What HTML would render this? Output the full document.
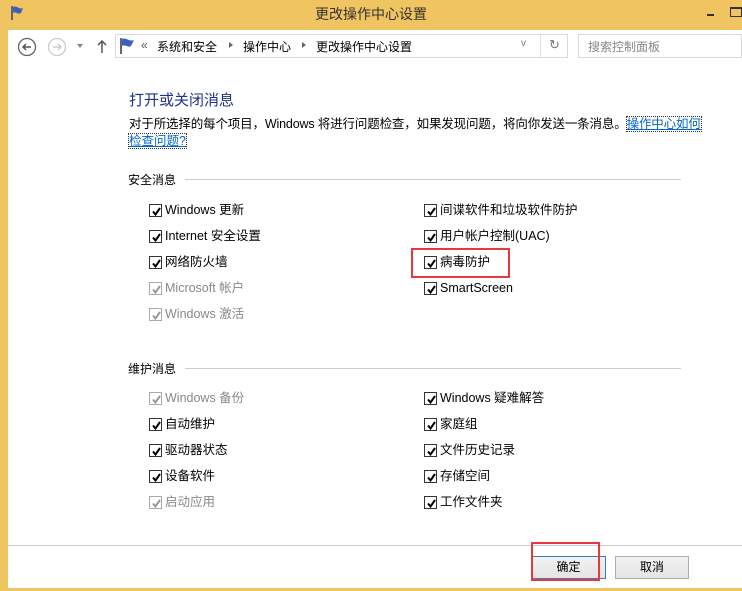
<!DOCTYPE html>
<html><head><meta charset="utf-8"><style>
*{margin:0;padding:0;box-sizing:border-box}
body{width:742px;height:591px;overflow:hidden;background:#f0c460;font-family:"Liberation Sans","Noto Sans CJK SC",sans-serif;font-size:12px;color:#000;position:relative}
.t{position:absolute;left:0;top:0;width:742px;height:30px;text-align:center;line-height:28px;font-size:14px;color:#333}
.c{position:absolute;left:8px;top:30px;width:734px;height:558px;background:#fff}
.a{position:absolute}
.cb{position:absolute;width:13px;height:13px;border:1px solid #333;background:#fff}
.cb svg{position:absolute;left:1px;top:1px}
.cb.g{border-color:#aaa}
.l{position:absolute;font-size:12.5px;line-height:16px}
.gr{color:#888}
.sec{position:absolute;left:128px;font-size:12px}
.line{position:absolute;height:1px;background:#ccc}
.btn{position:absolute;top:556px;height:23px;border:1px solid #adadad;background:linear-gradient(#f2f2f2,#e4e4e4);text-align:center;line-height:21px;font-size:12px}
.lk{color:#0066cc;text-decoration:underline;outline:1px dotted #333}
</style></head><body>
<div class="t">更改操作中心设置</div>
<svg class="a" style="left:9px;top:5px" width="16" height="16"><path d="M3 1v14" stroke="#446" stroke-width="1.5"/><path d="M4 2c4-2 6 3 10 1l-2 5c-3 2-6-2-8 0z" fill="#3a5fbf"/></svg>
<div class="a" style="left:707px;top:14px;width:7px;height:2px;background:#333"></div>
<div class="a" style="left:730px;top:7px;width:12px;height:10px;border:1px solid #333;border-top-width:2px"></div>
<div class="c"></div>
<svg class="a" style="left:17px;top:37px" width="20" height="20"><circle cx="10" cy="10" r="8.5" fill="none" stroke="#666" stroke-width="1.3"/><path d="M14 10H6M9 7l-3 3 3 3" fill="none" stroke="#555" stroke-width="1.5"/></svg>
<svg class="a" style="left:47px;top:37px" width="20" height="20"><circle cx="10" cy="10" r="8.5" fill="none" stroke="#ccc" stroke-width="1.3"/><path d="M6 10h8M11 7l3 3-3 3" fill="none" stroke="#ccc" stroke-width="1.5"/></svg>
<div class="a" style="left:77px;top:44px;border:3px solid transparent;border-top:4px solid #888"></div>
<svg class="a" style="left:96px;top:38px" width="12" height="16"><path d="M6 15V3M2 7l4-4 4 4" fill="none" stroke="#555" stroke-width="1.5"/></svg>
<div class="a" style="left:115px;top:34px;width:453px;height:24px;border:1px solid #d9d9d9"></div>
<svg class="a" style="left:118px;top:37px" width="18" height="18"><path d="M3 1v16" stroke="#334" stroke-width="1.5"/><path d="M4 2c4-2 7 3 12 1l-3 6c-3 2-6-2-9 0z" fill="#3a5fbf"/></svg>
<div class="a" style="left:141px;top:38px;font-size:12px;color:#555">«</div>
<div class="a" style="left:157px;top:38px;font-size:12px">系统和安全</div>
<div class="a" style="left:229px;top:42px;border:3px solid transparent;border-left:4px solid #666"></div>
<div class="a" style="left:243px;top:38px;font-size:12px">操作中心</div>
<div class="a" style="left:302px;top:42px;border:3px solid transparent;border-left:4px solid #666"></div>
<div class="a" style="left:316px;top:38px;font-size:12px">更改操作中心设置</div>
<div class="a" style="left:521px;top:38px;font-size:10px;color:#777">v</div>
<div class="a" style="left:540px;top:34px;width:1px;height:24px;background:#e0e0e0"></div>
<div class="a" style="left:549px;top:37px;font-size:13px;color:#777">↻</div>
<div class="a" style="left:578px;top:34px;width:164px;height:24px;border:1px solid #d9d9d9;font-size:12px;color:#888;padding:3px 0 0 9px">搜索控制面板</div>
<div class="a" style="left:129px;top:89px;font-size:15px;color:#1e3287">打开或关闭消息</div>
<div class="a" style="left:129px;top:116px;font-size:12.5px;line-height:17px;white-space:nowrap;letter-spacing:-0.15px">对于所选择的每个项目，Windows 将进行问题检查，如果发现问题，将向你发送一条消息。<span class="lk">操作中心如何</span></div>
<div class="a" style="left:129px;top:133px;font-size:12.5px;line-height:17px"><span class="lk">检查问题?</span></div>
<div class="sec" style="top:171px">安全消息</div>
<div class="line" style="left:185px;top:179px;width:496px"></div>
<div class="sec" style="top:360px">维护消息</div>
<div class="line" style="left:185px;top:368px;width:496px"></div>
<div id="rows"></div>
<div class="line" style="left:8px;top:545px;width:734px;background:#ccc"></div>
<div class="btn" style="left:531px;width:75px;border-color:#3c7fb1">确定</div>
<div class="btn" style="left:615px;width:74px">取消</div>
<div class="a" style="left:531px;top:542px;width:69px;height:39px;border:2px solid #e8383d"></div>
<div class="a" style="left:411px;top:248px;width:99px;height:30px;border:2px solid #e8383d"></div>
<script>
var L=[[149,210,"Windows 更新",0],[149,236,"Internet 安全设置",0],[149,262,"网络防火墙",0],[149,288,"Microsoft 帐户",1],[149,314,"Windows 激活",1],
[424,210,"间谍软件和垃圾软件防护",0],[424,236,"用户帐户控制(UAC)",0],[424,262,"病毒防护",0],[424,288,"SmartScreen",0],
[149,398,"Windows 备份",1],[149,424,"自动维护",0],[149,450,"驱动器状态",0],[149,476,"设备软件",0],[149,502,"启动应用",1],
[424,398,"Windows 疑难解答",0],[424,424,"家庭组",0],[424,450,"文件历史记录",0],[424,476,"存储空间",0],[424,502,"工作文件夹",0]];
var h="";L.forEach(function(r){var c=r[3]?"#999":"#000";
h+='<div class="cb'+(r[3]?' g':'')+'" style="left:'+r[0]+'px;top:'+(r[1]-6)+'px"><svg width="11" height="11"><path d="M2 5.5l2.5 3L9 2" fill="none" stroke="'+c+'" stroke-width="2"/></svg></div>';
h+='<div class="l'+(r[3]?' gr':'')+'" style="left:'+(r[0]+16)+'px;top:'+(r[1]-8)+'px">'+r[2]+'</div>';});
document.getElementById("rows").outerHTML=h;
</script>
</body></html>
